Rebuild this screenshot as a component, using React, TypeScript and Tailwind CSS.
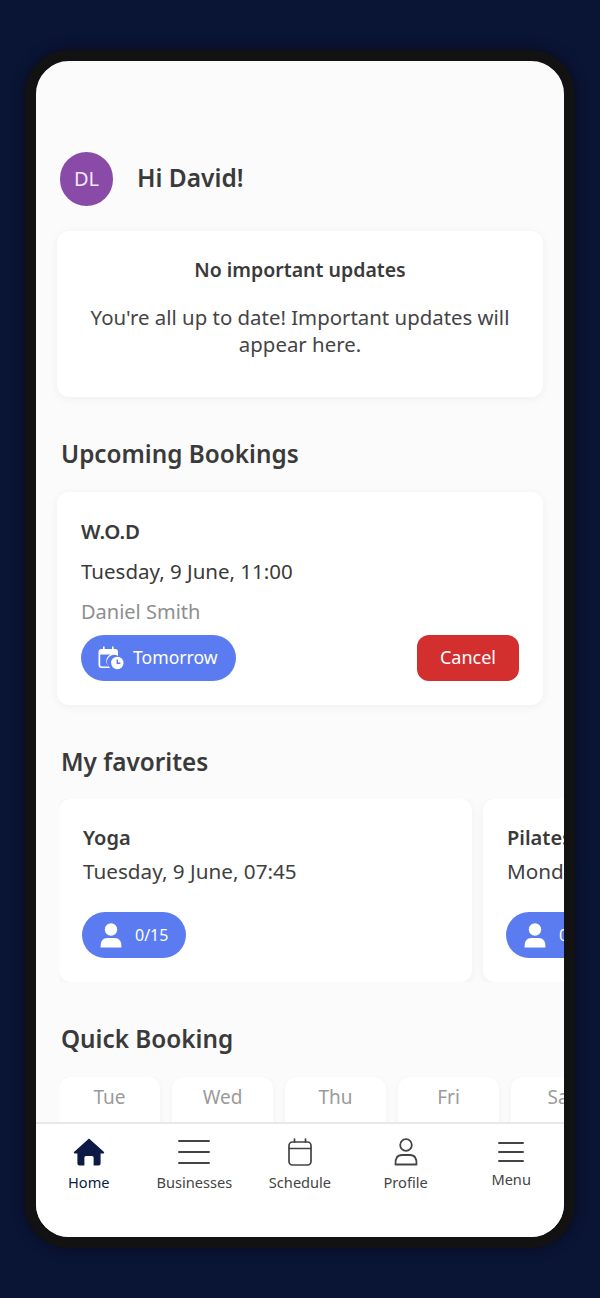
import { FC, ReactNode } from "react";

const DAYS = ["Tue", "Wed", "Thu", "Fri", "Sat"];

const HomeIcon = () => (
  <svg width="32" height="28" viewBox="0 0 32 28" fill="#0d1a45">
    <path d="M16 0.5 L31 14 Q31.6 15.2 30.4 15.6 L27.6 15.6 L27.6 25.5 Q27.6 27.4 25.6 27.4 L20.6 27.4 L20.6 19.5 Q20.6 18 19 18 L13 18 Q11.4 18 11.4 19.5 L11.4 27.4 L6.4 27.4 Q4.4 27.4 4.4 25.5 L4.4 15.6 L1.6 15.6 Q0.4 15.2 1 14 Z" />
  </svg>
);

const BarsIcon: FC<{ width: number; gap: number }> = ({ width, gap }) => (
  <svg width={width} height={gap * 2 + 2} viewBox={`0 0 ${width} ${gap * 2 + 2}`} stroke="#444" strokeWidth="2" strokeLinecap="round">
    <path d={`M1 1H${width - 1}M1 ${gap + 1}H${width - 1}M1 ${gap * 2 + 1}H${width - 1}`} />
  </svg>
);

const CalendarIcon = () => (
  <svg width="24" height="28" viewBox="0 0 24 28" fill="none" stroke="#444" strokeWidth="1.7" strokeLinecap="round">
    <rect x="1" y="4" width="22" height="23" rx="3.5" />
    <path d="M1 10.5H23M6.5 1V4M17.5 1V4" />
  </svg>
);

const ProfileIcon = () => (
  <svg width="24" height="28" viewBox="0 0 24 28" fill="none" stroke="#444" strokeWidth="1.8">
    <circle cx="12" cy="7" r="5.8" />
    <path d="M1.5 26.5 Q1 17 8 17 H16 Q23 17 22.5 26.5 Z" strokeLinejoin="round" />
  </svg>
);

const CalendarClockIcon = () => (
  <svg width="26" height="24" viewBox="0 0 26 24" fill="white">
    <path d="M5 0.5h1.6v2.5h7.4V0.5h1.6v2.5h1.4a3 3 0 0 1 3 3V10a7 7 0 0 0-7.8 12H3.5a3 3 0 0 1-3-3V6a3 3 0 0 1 3-3H5zM2.2 8.5V19a1.4 1.4 0 0 0 1.4 1.4h7.2a7 7 0 0 1 2-11.9z" />
    <circle cx="19.3" cy="17" r="6.2" />
    <path d="M19.3 13.6V17.2H22.4" fill="none" stroke="#5b7cf0" strokeWidth="1.5" />
  </svg>
);

const PersonFilledIcon = () => (
  <svg width="22" height="25" viewBox="0 0 22 25" fill="white">
    <circle cx="11" cy="6.5" r="6.2" />
    <path d="M0.5 24.5 Q0 15 7.5 15 H14.5 Q22 15 21.5 24.5 Z" />
  </svg>
);

const Pill: FC<{ children: ReactNode; className: string }> = ({ children, className }) => (
  <div className={`flex h-[46px] items-center rounded-full bg-[#5b7cf0] text-white ${className}`}>
    {children}
  </div>
);

const NavItem: FC<{ label: string; icon: ReactNode; active?: boolean; raised?: boolean }> = ({ label, icon, active, raised }) => (
  <div className="flex flex-1 flex-col items-center">
    <div className="flex h-[30px] items-center justify-center">{icon}</div>
    <span className={`mt-[5px] text-[14.6px] leading-[20px] ${active ? "text-[#0d1a45]" : "text-[#444]"} ${raised ? "-translate-y-[3px]" : ""}`}>
      {label}
    </span>
  </div>
);

const FavoriteCard: FC<{ title: string; date: string }> = ({ title, date }) => (
  <div className="h-[183px] w-[413px] shrink-0 rounded-xl bg-white px-6 pt-[25px] shadow-[0_2px_10px_rgba(0,0,0,0.05)]">
    <p className="text-[20px] font-semibold leading-[28px] text-[#3a3a3a]">{title}</p>
    <p className="mt-[5px] text-[20.7px] leading-[28px] text-[#3f3f3f]">{date}</p>
    <Pill className="mt-[27px] -ml-px w-[104px] gap-[13px] pl-[18px]">
      <PersonFilledIcon />
      <span className="text-[16px]">0/15</span>
    </Pill>
  </div>
);

export default function App() {
  return (
    <div className="h-[1298px] w-[600px] overflow-hidden bg-[#0a1435] pl-[25px] pt-[50px] font-['Noto_Sans',sans-serif]">
      <div className="flex h-[1198px] w-[550px] flex-col overflow-hidden rounded-[44px] border-[11px] border-[#121212] bg-[#fbfbfb] shadow-[0_0_14px_rgba(0,0,0,0.45)]">
        <div className="flex-1 overflow-hidden">
          <div className="flex items-center pl-6 pt-[91px]">
            <div className="flex h-[54px] w-[53px] items-center justify-center rounded-full bg-[#8a4aa8] text-[20px] text-[#f3e8f7]">
              DL
            </div>
            <h1 className="ml-6 -translate-y-px text-[24.5px] font-semibold text-[#3a3a3a]">Hi David!</h1>
          </div>

          <div className="ml-[21px] mt-[25px] h-[166px] w-[486px] rounded-xl bg-white px-6 pt-[25px] text-center shadow-[0_2px_10px_rgba(0,0,0,0.05)]">
            <p className="text-[19.5px] font-semibold leading-[28px] text-[#3a3a3a]">No important updates</p>
            <p className="mt-[20px] text-[20.4px] leading-[27px] text-[#454545]">
              You're all up to date! Important updates will appear here.
            </p>
          </div>

          <h2 className="ml-[25px] mt-[38px] text-[24.3px] font-semibold leading-[38px] text-[#3a3a3a]">Upcoming Bookings</h2>

          <div className="ml-[21px] mt-[19px] h-[213px] w-[486px] rounded-xl bg-white px-6 pt-[25px] shadow-[0_2px_10px_rgba(0,0,0,0.05)]">
            <p className="text-[20.5px] font-semibold leading-[28px] text-[#3a3a3a]">W.O.D</p>
            <p className="mt-[12px] text-[20.5px] leading-[28px] text-[#3a3a3a]">Tuesday, 9 June, 11:00</p>
            <p className="mt-[13px] text-[20px] leading-[28px] text-[#8e8e8e]">Daniel Smith</p>
            <div className="mt-[9px] flex items-center justify-between">
              <Pill className="w-[155px] gap-[9px] pl-[17px]">
                <CalendarClockIcon />
                <span className="-translate-y-px text-[17.6px]">Tomorrow</span>
              </Pill>
              <div className="flex h-[46px] w-[102px] items-center justify-center rounded-xl bg-[#d32f2f] text-[18px] text-white">
                <span className="-translate-y-px">Cancel</span>
              </div>
            </div>
          </div>

          <h2 className="ml-[25px] mt-[38px] text-[24.3px] font-semibold leading-[38px] text-[#3a3a3a]">My favorites</h2>

          <div className="ml-[23px] mt-[18px] flex gap-[11px] overflow-hidden">
            <FavoriteCard title="Yoga" date="Tuesday, 9 June, 07:45" />
            <FavoriteCard title="Pilates" date="Monday, 8 June, 09:00" />
          </div>

          <h2 className="ml-[25px] mt-[38px] text-[24.3px] font-semibold leading-[38px] text-[#3a3a3a]">Quick Booking</h2>

          <div className="ml-[23px] mt-[19px] flex gap-3 overflow-hidden">
            {DAYS.map((day) => (
              <div key={day} className="flex h-[60px] w-[101px] shrink-0 justify-center rounded-xl bg-white pt-[8px] text-[19px] leading-[24px] text-[#9a9a9a] shadow-[0_1px_6px_rgba(0,0,0,0.04)]">
                {day}
              </div>
            ))}
          </div>
        </div>

        <nav className="flex h-[115px] shrink-0 border-t-2 border-[#e8e8e8] bg-white pt-[13px]">
          <NavItem active label="Home" icon={<HomeIcon />} />
          <NavItem label="Businesses" icon={<BarsIcon width={32} gap={11} />} />
          <NavItem label="Schedule" icon={<CalendarIcon />} />
          <NavItem label="Profile" icon={<ProfileIcon />} />
          <NavItem raised label="Menu" icon={<BarsIcon width={26} gap={9} />} />
        </nav>
      </div>
    </div>
  );
}
